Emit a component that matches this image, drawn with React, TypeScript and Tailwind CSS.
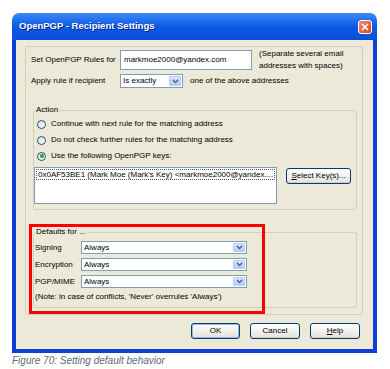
import React from 'react';

function Chevron() {
  return (
    <svg width="7" height="5" viewBox="0 0 7 5" className="block">
      <path d="M0.8 0.8 L3.5 3.5 L6.2 0.8" fill="none" stroke="#4D6185" strokeWidth="1.4" />
    </svg>
  );
}

function Combo({ value, className }: { value: string; className: string }) {
  return (
    <div className={`flex items-stretch border border-[#7F9DB9] bg-white ${className}`}>
      <span className="flex-1 pl-[2px] leading-none flex items-center text-black">{value}</span>
      <span className="m-px flex w-[12px] items-center justify-center rounded-[1px] border border-[#B9CCF7] bg-gradient-to-b from-[#DCE6FD] to-[#B4C9F7]">
        <Chevron />
      </span>
    </div>
  );
}

function Radio({ checked, label }: { checked?: boolean; label: string }) {
  return (
    <div className="flex h-[16px] items-center pl-[3px]">
      <span className="flex h-[9px] w-[9px] items-center justify-center rounded-full border border-[#1C5180] bg-gradient-to-br from-[#DCDCD7] to-white">
        {checked && <span className="h-[4px] w-[4px] rounded-full bg-[#21A121]" />}
      </span>
      <span className="ml-[5px]">{label}</span>
    </div>
  );
}

function XpButton({ children, w, isDefault }: { children: React.ReactNode; w: string; isDefault?: boolean }) {
  return (
    <div
      className={`flex h-[16px] items-center justify-center rounded-[3px] border border-[#003C74] bg-gradient-to-b from-white to-[#E3E2DA] text-black ${w} ${
        isDefault ? 'shadow-[inset_0_0_0_1px_#98B8EA]' : 'shadow-[inset_0_-1px_0_#D6D0C5]'
      }`}
    >
      {children}
    </div>
  );
}

export default function App() {
  return (
    <div className="relative h-[369px] w-[390px] overflow-hidden bg-white font-['Liberation_Sans',Arial,sans-serif] text-[8px] text-black">
      <div className="pl-[12px] pt-[13px]">
        <div className="w-[365px]">
          {/* title bar */}
          <div className="flex h-[27px] items-center justify-between rounded-t-[7px] bg-gradient-to-b from-[#3D8BF6] via-[#0B5AE3] to-[#0A50D8] pl-[7px] pr-[5px]">
            <span className="text-[9.5px] font-bold text-white [text-shadow:1px_1px_0_#0A1E8C]">
              OpenPGP - Recipient Settings
            </span>
            <span className="flex h-[14px] w-[14px] items-center justify-center rounded-[3px] border border-white bg-gradient-to-br from-[#F08A6A] to-[#D5421F]">
              <svg width="8" height="8" viewBox="0 0 8 8">
                <path d="M1 1 L7 7 M7 1 L1 7" stroke="white" strokeWidth="1.6" />
              </svg>
            </span>
          </div>
          {/* body */}
          <div className="border-x-4 border-b-4 border-[#0B3FD6] bg-[#ECE9D8] pb-[10px] pt-[6px]">
            <fieldset className="ml-[9px] w-[338px] rounded-[3px] border border-[#D0D0BF] px-[5px] pb-[6px] pt-[3px]">
              <div className="flex h-[20px] items-center">
                <span className="w-[89px]">Set OpenPGP Rules for</span>
                <div className="flex h-[20px] w-[132px] items-center border border-[#7F9DB9] bg-white pl-[3px]">
                  markmoe2000@yandex.com
                </div>
                <div className="ml-[7px] leading-[12px]">
                  <div>(Separate several email</div>
                  <div>addresses with spaces)</div>
                </div>
              </div>
              <div className="mt-[4px] flex h-[14px] items-center">
                <span className="w-[89px]">Apply rule if recipient</span>
                <Combo value="Is exactly" className="h-[14px] w-[63px]" />
                <span className="ml-[7px]">one of the above addresses</span>
              </div>

              <fieldset className="ml-[2px] mt-[17px] rounded-[3px] border border-[#D0D0BF] pb-[5px]">
                <legend className="ml-[1px] px-[1px] leading-[10px]">Action</legend>
                <div className="pt-[1px]">
                  <Radio label="Continue with next rule for the matching address" />
                  <Radio label="Do not check further rules for the matching address" />
                  <Radio checked label="Use the following OpenPGP keys:" />
                </div>
                <div className="mt-[3px] flex items-start">
                  <div className="h-[37px] w-[243px] border border-[#7F9DB9] bg-white p-px">
                    <div className="border border-dotted border-[#555] pl-[1px] leading-[9px] whitespace-nowrap overflow-hidden">
                      0x0AF53BE1 (Mark Moe (Mark's Key) &lt;markmoe2000@yandex....
                    </div>
                  </div>
                  <div className="ml-[9px] mt-px">
                    <XpButton w="w-[65px] h-[15px]">
                      <span>
                        <span className="underline">S</span>elect Key(s)...
                      </span>
                    </XpButton>
                  </div>
                </div>
              </fieldset>

              <fieldset className="ml-[2px] mt-[17px] rounded-[3px] border border-[#D0D0BF] pb-[5px]">
                <legend className="ml-[1px] px-[1px] leading-[10px]">Defaults for ...</legend>
                <div className="flex flex-col gap-[4px] pl-[1px] pt-[4px]">
                  {[
                    ['Signing', 'Always'],
                    ['Encryption', 'Always'],
                    ['PGP/MIME', 'Always'],
                  ].map(([label, value]) => (
                    <div key={label} className="flex h-[13px] items-center">
                      <span className="w-[46px]">{label}</span>
                      <Combo value={value} className="h-[13px] w-[166px]" />
                    </div>
                  ))}
                </div>
                <div className="mt-[4px] pl-[1px] leading-[10px]">
                  (Note: in case of conflicts, 'Never' overrules 'Always')
                </div>
              </fieldset>
            </fieldset>

            <div className="mt-[8px] flex justify-end gap-[10px] pr-[13px]">
              <XpButton w="w-[49px]" isDefault>
                OK
              </XpButton>
              <XpButton w="w-[50px]">Cancel</XpButton>
              <XpButton w="w-[50px]">
                <span>
                  <span className="underline">H</span>elp
                </span>
              </XpButton>
            </div>
          </div>
        </div>
        <div className="mt-[2px] text-[10px] italic leading-[12px] text-[#5C6B7C]">
          Figure 70: Setting default behavior
        </div>
      </div>
      <div className="absolute left-[29px] top-[224px] h-[90px] w-[236px] border-[3px] border-[#FF0000]" />
    </div>
  );
}
